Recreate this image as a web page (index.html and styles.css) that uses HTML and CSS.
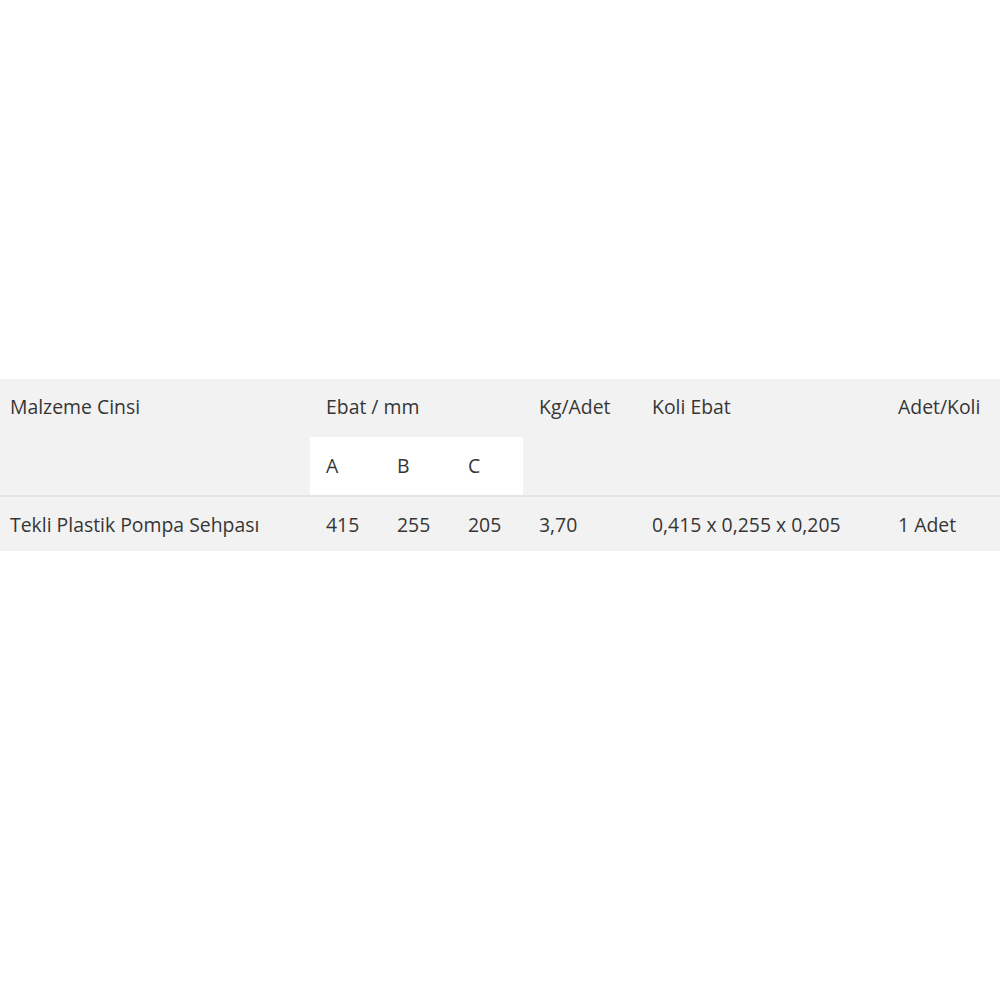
FILE: index.html
```html
<!DOCTYPE html>
<html lang="tr">
<head>
<meta charset="utf-8">
<title>Ürün Tablosu</title>
<link rel="stylesheet" href="styles.css">
</head>
<body>
<main class="page">
  <table class="spec">
    <colgroup>
      <col class="c-name">
      <col class="c-dim">
      <col class="c-dim">
      <col class="c-dim">
      <col class="c-kg">
      <col class="c-box">
      <col class="c-qty">
    </colgroup>
    <thead>
      <tr class="head-top">
        <th class="first">Malzeme Cinsi</th>
        <th colspan="3">Ebat / mm</th>
        <th>Kg/Adet</th>
        <th>Koli Ebat</th>
        <th>Adet/Koli</th>
      </tr>
      <tr class="head-sub">
        <th class="first"></th>
        <th class="white">A</th>
        <th class="white">B</th>
        <th class="white">C</th>
        <th></th>
        <th></th>
        <th></th>
      </tr>
    </thead>
    <tbody>
      <tr class="body-row">
        <td class="first">Tekli Plastik Pompa Sehpası</td>
        <td>415</td>
        <td>255</td>
        <td>205</td>
        <td>3,70</td>
        <td>0,415 x 0,255 x 0,205</td>
        <td>1 Adet</td>
      </tr>
    </tbody>
  </table>
</main>
</body>
</html>
```
FILE: styles.css
```css
html, body {
  margin: 0;
  padding: 0;
  background: #ffffff;
}

.page {
  padding-top: 379px;
}

.spec {
  width: 1000px;
  border-collapse: collapse;
  table-layout: fixed;
  font-family: "Open Sans", "Liberation Sans", sans-serif;
  font-size: 19.4px;
  color: #363636;
  background: #f2f2f2;
}

.c-name { width: 310px; }
.c-dim { width: 71px; }
.c-kg { width: 113px; }
.c-box { width: 246px; }
.c-qty { width: 118px; }

.spec th,
.spec td {
  font-weight: 400;
  text-align: left;
  padding: 0 0 0 16px;
  vertical-align: middle;
  white-space: nowrap;
}

.spec .first {
  padding-left: 10px;
}

.head-top th {
  height: 54px;
  padding-bottom: 4px;
}

.head-sub th {
  height: 56px;
  padding-bottom: 2px;
}

.head-sub .white {
  background: #ffffff;
}

.body-row td {
  height: 53px;
  border-top: 2px solid #e4e4e4;
  padding-top: 1px;
}
```
